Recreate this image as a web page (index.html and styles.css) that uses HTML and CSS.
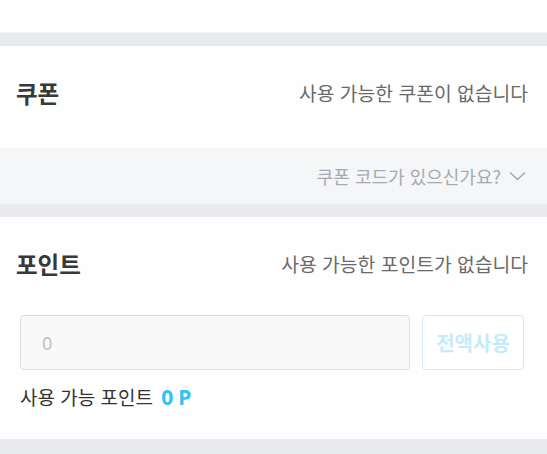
FILE: index.html
```html
<!DOCTYPE html>
<html lang="ko">
<head>
<meta charset="utf-8">
<link rel="stylesheet" href="styles.css">
</head>
<body>
<div class="page">
  <div class="prev-section"></div>
  <div class="divider"></div>

  <section class="section coupon">
    <div class="section-head">
      <h2 class="section-title">쿠폰</h2>
      <span class="section-status">사용 가능한 쿠폰이 없습니다</span>
    </div>
  </section>
  <div class="code-strip">
    <span class="code-text">쿠폰 코드가 있으신가요?</span>
    <svg class="chevron" width="17" height="10" viewBox="0 0 17 10" aria-hidden="true">
      <path d="M1 1.5 L8.5 8.5 L16 1.5" fill="none" stroke="#a3a7ad" stroke-width="1.5"/>
    </svg>
  </div>
  <div class="divider"></div>

  <section class="section point">
    <div class="section-head">
      <h2 class="section-title">포인트</h2>
      <span class="section-status">사용 가능한 포인트가 없습니다</span>
    </div>
    <div class="point-form">
      <input class="point-input" type="text" placeholder="0">
      <button class="use-all" type="button">전액사용</button>
    </div>
    <p class="point-available">사용 가능 포인트 <strong class="point-value">0P</strong></p>
  </section>
  <div class="divider bottom"></div>
</div>
</body>
</html>
```

FILE: styles.css
```css
* { box-sizing: border-box; }
html, body { margin: 0; padding: 0; background: #ffffff; }
body {
  font-family: "Noto Sans CJK KR", "Noto Sans", sans-serif;
  color: #333;
}
.page { width: 547px; }
.prev-section { height: 32px; background: #fefefe; }
.divider {
  height: 14px;
  background: #e9eaed;
  border-top: 1px solid #f1f2f4;
}
.divider.bottom { height: 16px; border-top: 0; }

.section { background: #fefefe; }
.section-head {
  display: flex;
  align-items: center;
  justify-content: space-between;
  padding: 30px 19px 0 16px;
  height: 64px;
}
.coupon .section-head { height: 102px; padding-bottom: 38px; }
.section-title {
  margin: 0;
  font-size: 23.5px;
  font-weight: 700;
  line-height: 34px;
  color: #383838;
}
.section-status {
  font-size: 19.3px;
  line-height: 34px;
  color: #6a6a6a;
}

.code-strip {
  height: 55px;
  background: #f5f6f8;
  display: flex;
  align-items: center;
  justify-content: flex-end;
  gap: 8px;
  padding-right: 21px;
}
.code-text {
  font-size: 18px;
  color: #a6aaaf;
}
.chevron { display: block; margin-top: 1px; }

.point-form {
  display: flex;
  gap: 12px;
  padding: 34px 23px 0 20px;
}
.point-input {
  flex: 1;
  height: 55px;
  border: 1px solid #dcdcdc;
  border-radius: 4px;
  background: #f9f9f9;
  padding: 0 0 0 21px;
  font-family: "Noto Sans", "Noto Sans CJK KR", sans-serif;
  font-size: 18px;
  color: #333;
  outline: none;
}
.point-input::placeholder { color: #c0c0c0; }
.use-all {
  width: 102px;
  height: 55px;
  border: 1px solid #c9edfb;
  border-radius: 4px;
  background: #ffffff;
  font-family: "Noto Sans CJK KR", sans-serif;
  font-size: 20px;
  font-weight: 700;
  color: #c4ebfa;
  padding: 0;
}
.point-available {
  margin: 0;
  padding: 15px 20px 30px 20px;
  font-size: 19px;
  line-height: 24px;
  color: #333;
}
.point-value {
  color: #2ec3f1;
  font-family: "Noto Sans", sans-serif;
  font-size: 21px;
  font-weight: 700;
  letter-spacing: 5px;
  margin-left: 3px;
}
```
